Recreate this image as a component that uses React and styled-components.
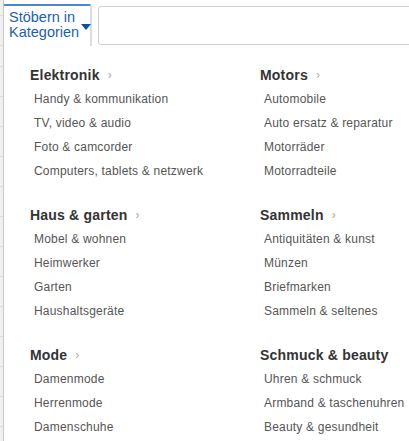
import React from "react"
import styled, { createGlobalStyle } from "styled-components"

const groups = [
  {
    title: "Elektronik",
    more: true,
    items: ["Handy & kommunikation", "TV, video & audio", "Foto & camcorder", "Computers, tablets & netzwerk"],
  },
  {
    title: "Motors",
    more: true,
    items: ["Automobile", "Auto ersatz & reparatur", "Motorräder", "Motorradteile"],
  },
  {
    title: "Haus & garten",
    more: true,
    items: ["Mobel & wohnen", "Heimwerker", "Garten", "Haushaltsgeräte"],
  },
  {
    title: "Sammeln",
    more: true,
    items: ["Antiquitäten & kunst", "Münzen", "Briefmarken", "Sammeln & seltenes"],
  },
  {
    title: "Mode",
    more: true,
    items: ["Damenmode", "Herrenmode", "Damenschuhe"],
  },
  {
    title: "Schmuck & beauty",
    more: false,
    items: ["Uhren & schmuck", "Armband & taschenuhren", "Beauty & gesundheit"],
  },
]

export default function App () {
  return (
    <Page>
      <GlobalStyle/>
      <Strip/>
      <Main>
        <Header>
          <Tab>
            <TabLabel>Stöbern in<br/>Kategorien</TabLabel>
            <Caret/>
          </Tab>
          <SearchBox/>
        </Header>
        <Menu>
          {
            groups.map((group, index) => {
              return (
                <Group key={index}>
                  <Heading>
                    {group.title}
                    {group.more && <Chevron>›</Chevron>}
                  </Heading>
                  {
                    group.items.map((item, i) => (
                      <Item key={i}>{item}</Item>
                    ))
                  }
                </Group>
              )
            })
          }
        </Menu>
      </Main>
    </Page>
  )
}

const GlobalStyle = createGlobalStyle`
  html, body {
    margin: 0;
    padding: 0;
    background: #fff;
  }
  body {
    font-family: "Liberation Sans", Arial, sans-serif;
  }
`

const Page = styled.div`
  display: flex;
  flex-direction: row;
  width: 409px;
  height: 441px;
  overflow: hidden;
`

const Strip = styled.div`
  width: 3px;
  flex: none;
  background: repeating-linear-gradient(
    to bottom,
    #f0f0f0 0px,
    #f0f0f0 6px,
    #dcdcdc 6px,
    #dcdcdc 7px,
    #f0f0f0 7px,
    #f0f0f0 30px
  );
  background-position: 0 60px;
`

const Main = styled.div`
  display: flex;
  flex-direction: column;
  flex: 1;
  border-left: 1px solid #c9c9c9;
  background: #fff;
`

const Header = styled.div`
  display: flex;
  flex-direction: row;
  align-items: flex-start;
  height: 46px;
  padding-top: 4px;
  box-sizing: border-box;
  margin-left: -1px;
`

const Tab = styled.div`
  display: flex;
  flex-direction: row;
  align-items: flex-end;
  width: 89px;
  height: 42px;
  box-sizing: border-box;
  padding: 4px 0 0 5px;
  border-top: 2px solid #4a86d0;
  border-left: 1px solid #c9c9c9;
  border-right: 2px solid #dddddd;
  border-top-right-radius: 3px;
  border-top-left-radius: 2px;
  background: #fff;
`

const TabLabel = styled.div`
  align-self: flex-start;
  font-size: 14.5px;
  line-height: 15px;
  color: #1a5fb4;
`

const Caret = styled.div`
  width: 0;
  height: 0;
  margin: 0 0 16px 2px;
  border-left: 5px solid transparent;
  border-right: 5px solid transparent;
  border-top: 6px solid #0a4fa8;
`

const SearchBox = styled.div`
  flex: 1;
  height: 39px;
  margin: 2px -12px 0 6px;
  border: 1px solid #cfcfcf;
  border-radius: 3px;
  box-sizing: border-box;
`

const Menu = styled.div`
  display: grid;
  grid-template-columns: 230px 1fr;
  row-gap: 20px;
  padding: 17px 0 0 26px;
`

const Group = styled.div`
  display: flex;
  flex-direction: column;
`

const Heading = styled.div`
  display: flex;
  flex-direction: row;
  align-items: center;
  height: 24px;
  font-size: 14px;
  font-weight: bold;
  letter-spacing: 0.2px;
  color: #333;
`

const Chevron = styled.span`
  margin-left: 8px;
  font-size: 12px;
  font-weight: normal;
  color: #aaa;
`

const Item = styled.div`
  height: 24px;
  line-height: 24px;
  padding-left: 4px;
  font-size: 12px;
  letter-spacing: 0.2px;
  color: #555;
`
